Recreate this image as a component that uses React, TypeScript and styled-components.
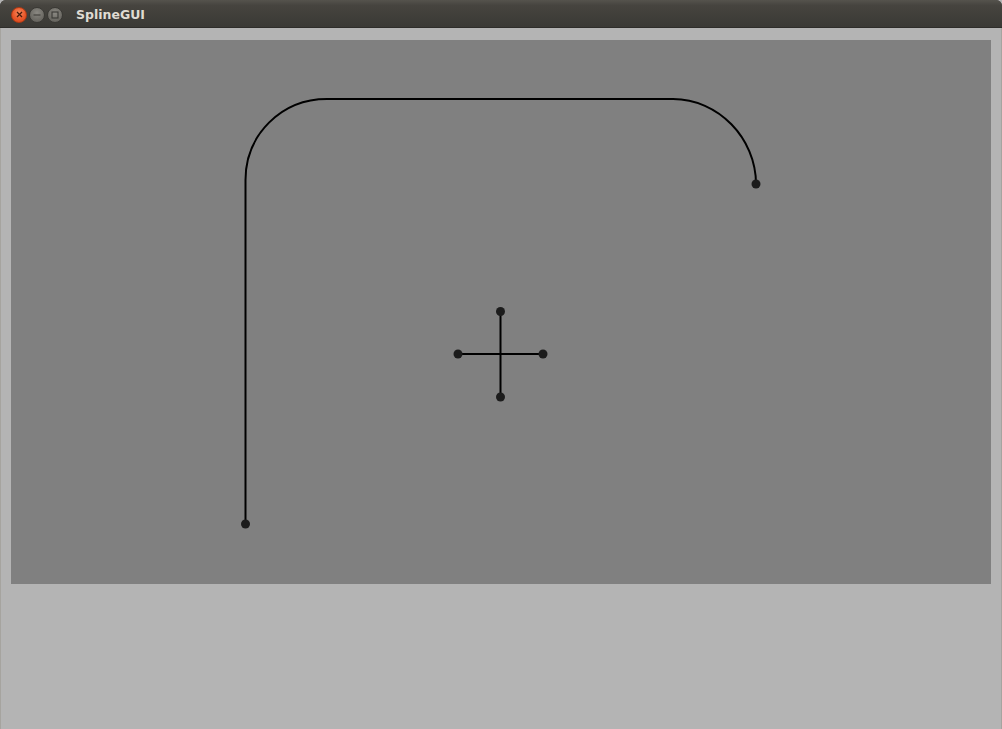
import styled, { createGlobalStyle } from "styled-components";

const GlobalStyle = createGlobalStyle`
  html, body {
    margin: 0;
    padding: 0;
    background: #b4b4b4;
  }
  #root {
    width: 1002px;
    height: 729px;
  }
`;

const Window = styled.div`
  width: 1002px;
  height: 729px;
  display: flex;
  flex-direction: column;
  background: #3c3b37;
  border-radius: 6px 6px 0 0;
  overflow: hidden;
`;

const TitleBar = styled.div`
  height: 28px;
  flex-shrink: 0;
  display: flex;
  align-items: center;
  padding-left: 11px;
  background: linear-gradient(to bottom, #55534d 0%, #46443f 20%, #3a3935 100%);
  border-bottom: 1px solid #2e2d2a;
  box-sizing: border-box;
`;

const ButtonGroup = styled.div`
  display: flex;
  gap: 2px;
  margin-top: 2px;
`;

const WinButton = styled.div<{ $kind: "close" | "min" | "max" }>`
  width: 16px;
  height: 16px;
  border-radius: 50%;
  display: flex;
  align-items: center;
  justify-content: center;
  box-sizing: border-box;
  border: 1px solid ${(p) => (p.$kind === "close" ? "#b03a14" : "#3a3935")};
  background: ${(p) =>
    p.$kind === "close"
      ? "radial-gradient(circle at 50% 35%, #f58a5d 0%, #e9572a 55%, #d1461c 100%)"
      : "radial-gradient(circle at 50% 35%, #8a8882 0%, #6d6b65 60%, #5d5b56 100%)"};
  svg {
    display: block;
  }
`;

const Title = styled.span`
  margin-left: 13px;
  margin-top: 1px;
  font-family: "DejaVu Sans", "Liberation Sans", sans-serif;
  font-weight: bold;
  font-size: 12.5px;
  color: #dfdbd2;
`;

const Body = styled.div`
  flex: 1;
  background: #b4b4b4;
  border-left: 1px solid #a6a49f;
  border-right: 1px solid #a6a49f;
  padding: 12px 10px 0 10px;
  display: flex;
  flex-direction: column;
`;

const Canvas = styled.div`
  width: 980px;
  height: 544px;
  background: #808080;
  svg {
    display: block;
  }
`;

const dots: [number, number][] = [
  [234.5, 484],
  [745, 144],
  [489.5, 271.5],
  [489.5, 357],
  [447, 314],
  [532, 314],
];

export default function App() {
  return (
    <>
      <GlobalStyle />
      <Window>
        <TitleBar>
          <ButtonGroup>
            <WinButton $kind="close">
              <svg width="7" height="7" viewBox="0 0 7 7">
                <path d="M1 1 L6 6 M6 1 L1 6" stroke="#4a1c0c" strokeWidth="1.3" />
              </svg>
            </WinButton>
            <WinButton $kind="min">
              <svg width="8" height="8" viewBox="0 0 8 8">
                <path d="M0.5 4 H7.5" stroke="#3a3935" strokeWidth="1.2" />
              </svg>
            </WinButton>
            <WinButton $kind="max">
              <svg width="8" height="8" viewBox="0 0 8 8">
                <rect x="1" y="1" width="6" height="6" fill="none" stroke="#3a3935" strokeWidth="1.1" />
              </svg>
            </WinButton>
          </ButtonGroup>
          <Title>SplineGUI</Title>
        </TitleBar>
        <Body>
          <Canvas>
            <svg width="980" height="544" viewBox="0 0 980 544">
              <path
                d="M234.5 484 L234.5 140 C234.5 95 270 59 316 59 L662 59 C707 59 745 98 745 144"
                fill="none"
                stroke="#000"
                strokeWidth="2"
              />
              <path d="M447 314 H532 M489.5 271.5 V357" stroke="#000" strokeWidth="2" />
              {dots.map(([x, y], i) => (
                <circle key={i} cx={x} cy={y} r="4.5" fill="#1c1c1c" />
              ))}
            </svg>
          </Canvas>
        </Body>
      </Window>
    </>
  );
}
